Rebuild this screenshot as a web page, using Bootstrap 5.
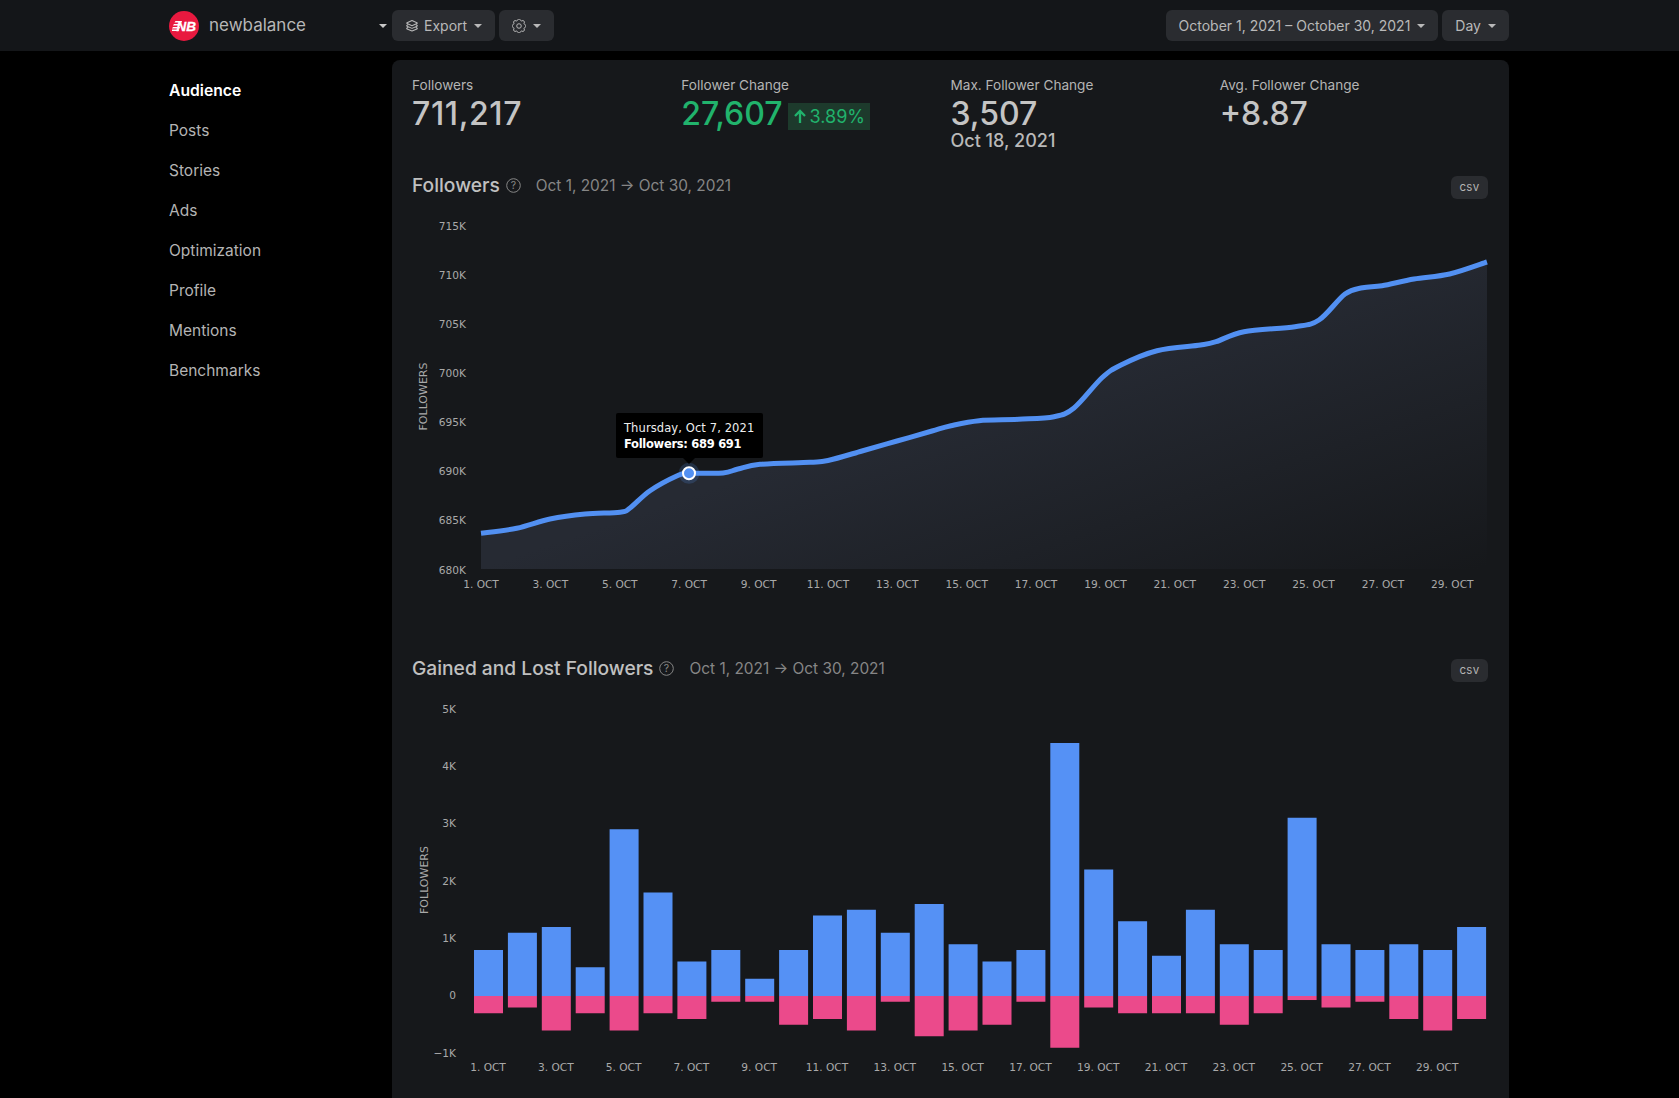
<!DOCTYPE html>
<html lang="en">
<head>
<meta charset="utf-8">
<title>Audience</title>
<link href="https://cdn.jsdelivr.net/npm/bootstrap@5.3.0/dist/css/bootstrap.min.css" rel="stylesheet">
<style>
html, body { height: 100%; }
body { background: #000; color: #b9b9b9; font-family: Inter, "Liberation Sans", sans-serif; overflow: hidden; }
.topbar { height: 51px; background: #141619; padding: 0 170px 0 169px; }
.logo-circle { width: 30px; height: 30px; flex: none; }
.brand-name { font-size: 17px; color: #b7b7b7; margin-left: 10px; width: 170px; line-height: 26px; margin-top: -2px; }
.caret { display: inline-block; width: 0; height: 0; border-left: 4.5px solid transparent; border-right: 4.5px solid transparent; border-top: 4.5px solid currentColor; }
.brand-caret { color: #c8c8c8; margin-right: 5px; }
.tool-btn { background: #2a2c30; color: #b9b9b9; border: 0; border-radius: 6px; height: 31px; padding: 1px 13px 0; font-size: 14px; display: flex; align-items: center; gap: 7px; line-height: 1; }
.tool-btn:hover { background: #2a2c30; color: #b9b9b9; }
.tool-icon { flex: none; }
.icon-tight { margin-right: -2px; }
.shell { padding: 9px 170px 0 169px; }
.side-nav { width: 223px; flex: none; padding-top: 11px; }
.side-link { display: block; height: 40px; line-height: 40px; color: #b4b4b4; font-size: 15.5px; text-decoration: none; }
.side-link.on { color: #fff; font-weight: 600; font-size: 15.7px; }
.panel { flex: 1; background: #16181b; border-radius: 8px 8px 0 0; padding: 15px 20px 0; min-height: 1100px; }
.stat-label { font-size: 13.6px; line-height: 21px; color: #b4b4b4; }
.stat-value { font-size: 32px; line-height: 36px; font-weight: 500; color: #c4c4c4; }
.stat-wide { letter-spacing: .6px; }
.stat-green { color: #21b36c; }
.delta { background: #1d3a2c; color: #21b36c; font-size: 18px; font-weight: 400; height: 27px; line-height: 27px; padding: 0 5px; display: inline-flex; align-items: center; gap: 3px; margin-left: 5px; vertical-align: 2px; }
.stat-sub { font-size: 18px; line-height: 22px; font-weight: 500; color: #b9b9b9; margin-top: -2px; }
.stats-row { height: 95px; }
.sec-head { height: 31px; }
.sec-title { font-size: 19.2px; font-weight: 500; color: #c0c0c0; line-height: 31px; margin-top: -1px; }
.sec-range { font-size: 15.4px; color: #868686; margin: 1px 0 0 15px; }
.help-ic { margin-left: 6px; flex: none; }
.csv-btn { background: #2a2c30; color: #b4b4b4; border: 0; border-radius: 6px; font-size: 11.5px; height: 23px; width: 37px; padding: 0; line-height: 1; letter-spacing: .3px; margin-right: 1px; margin-top: 4px; }
.csv-btn:hover { background: #2a2c30; color: #b4b4b4; }
.chart-box { position: relative; }
.chart-box svg { display: block; }
.chart-one { height: 452px; }
.chart-two { height: 420px; }
.chart-txt { font-family: "DejaVu Sans", sans-serif; font-size: 10.6px; fill: #a9a9a9; }
.chart-ytitle { font-size: 11px; }
.tip { position: absolute; left: 204px; top: 212px; width: 147px; height: 45px; background: #000; border-radius: 2px; color: #eee; font: 11.5px/15.5px "DejaVu Sans", sans-serif; padding: 8px 8px; letter-spacing: .1px; white-space: nowrap; }
.tip::after { content: ""; position: absolute; left: 67px; bottom: -6px; border-left: 6px solid transparent; border-right: 6px solid transparent; border-top: 6px solid #000; }
.tip b { font-weight: 700; color: #fff; letter-spacing: -.3px; }
</style>
</head>
<body>
<nav class="topbar d-flex align-items-center">
  <svg class="logo-circle" viewBox="0 0 30 30" aria-label="New Balance">
    <circle cx="15" cy="15" r="15" fill="#e8193f"/>
    <g fill="#fff">
      <polygon points="6.5,10 13,10 12.5,11.6 5.5,11.6"/>
      <polygon points="5,13 12,13 11.5,14.6 4,14.6"/>
      <polygon points="4,16 11,16 10.5,17.4 3,17.4"/>
      <polygon points="3,18.6 10,18.6 9.5,20 3,20"/>
    </g>
    <text x="7.5" y="20" font-family="Liberation Sans" font-size="13.5" font-style="italic" font-weight="700" fill="#fff" stroke="#fff" stroke-width=".3">NB</text>
  </svg>
  <span class="brand-name">newbalance</span>
  <span class="caret brand-caret"></span>
  <button class="btn tool-btn" type="button">
    <svg class="tool-icon icon-tight" width="14" height="14" viewBox="0 0 16 16" fill="none" stroke="currentColor" stroke-width="1.2" stroke-linejoin="round" stroke-linecap="round"><path d="M8 1.8 13.6 4.2Q14.6 4.7 13.6 5.2L8 7.6 2.4 5.2Q1.4 4.7 2.4 4.2Z"/><path d="M3.4 6.6 2.4 7.2Q1.4 7.8 2.4 8.3L8 10.7 13.6 8.3Q14.6 7.8 13.6 7.2L12.6 6.6"/><path d="M3.4 9.7 2.4 10.3Q1.4 10.9 2.4 11.4L8 13.8 13.6 11.4Q14.6 10.9 13.6 10.3L12.6 9.7"/></svg>
    Export <span class="caret"></span>
  </button>
  <button class="btn tool-btn ms-1" type="button">
    <svg class="tool-icon" width="14" height="14" viewBox="0 0 16 16" fill="none" stroke="currentColor" stroke-width="1.1"><circle cx="8" cy="8" r="2.6"/><path d="M9.796 1.343c-.527-1.79-3.065-1.79-3.592 0l-.094.319a.873.873 0 0 1-1.255.52l-.292-.16c-1.64-.892-3.433.902-2.54 2.541l.159.292a.873.873 0 0 1-.52 1.255l-.319.094c-1.79.527-1.79 3.065 0 3.592l.319.094a.873.873 0 0 1 .52 1.255l-.16.292c-.892 1.64.901 3.434 2.541 2.54l.292-.159a.873.873 0 0 1 1.255.52l.094.319c.527 1.79 3.065 1.79 3.592 0l.094-.319a.873.873 0 0 1 1.255-.52l.292.16c1.64.893 3.434-.902 2.54-2.541l-.159-.292a.873.873 0 0 1 .52-1.255l.319-.094c1.79-.527 1.79-3.065 0-3.592l-.319-.094a.873.873 0 0 1-.52-1.255l.16-.292c.893-1.64-.902-3.433-2.541-2.54l-.292.159a.873.873 0 0 1-1.255-.52l-.094-.319z"/></svg>
    <span class="caret"></span>
  </button>
  <button class="btn tool-btn ms-auto" type="button">October 1, 2021 – October 30, 2021 <span class="caret"></span></button>
  <button class="btn tool-btn ms-1" type="button">Day <span class="caret"></span></button>
</nav>

<div class="shell d-flex">
  <nav class="side-nav">
    <a class="side-link on" href="#">Audience</a>
    <a class="side-link" href="#">Posts</a>
    <a class="side-link" href="#">Stories</a>
    <a class="side-link" href="#">Ads</a>
    <a class="side-link" href="#">Optimization</a>
    <a class="side-link" href="#">Profile</a>
    <a class="side-link" href="#">Mentions</a>
    <a class="side-link" href="#">Benchmarks</a>
  </nav>
  <main class="panel">
    <div class="row g-0 stats-row">
      <div class="col-3">
        <div class="stat-label">Followers</div>
        <div class="stat-value stat-wide">711,217</div>
      </div>
      <div class="col-3">
        <div class="stat-label">Follower Change</div>
        <div class="stat-value stat-green">27,607<span class="delta"><svg width="14" height="14" viewBox="0 0 14 14" fill="none" stroke="currentColor" stroke-width="2.3"><path d="M7 14V2M2 7 7 2 12 7"/></svg>3.89%</span></div>
      </div>
      <div class="col-3">
        <div class="stat-label">Max. Follower Change</div>
        <div class="stat-value">3,507</div>
        <div class="stat-sub">Oct 18, 2021</div>
      </div>
      <div class="col-3">
        <div class="stat-label">Avg. Follower Change</div>
        <div class="stat-value">+8.87</div>
      </div>
    </div>

    <div class="sec-head d-flex align-items-center">
      <span class="sec-title">Followers</span>
      <svg class="help-ic" width="15" height="15" viewBox="0 0 15 15"><circle cx="7.5" cy="7.5" r="6.8" fill="none" stroke="#868686"/><text x="7.5" y="11.2" text-anchor="middle" font-size="10.5" fill="#868686" font-family="Inter">?</text></svg>
      <span class="sec-range">Oct 1, 2021 → Oct 30, 2021</span>
      <button class="btn csv-btn ms-auto" type="button">csv</button>
    </div>
    <div class="chart-box chart-one">
      <svg id="chartA" width="1077" height="452" viewBox="412 201 1077 452"></svg>
      <div class="tip">Thursday, Oct 7, 2021<br><b>Followers: 689 691</b></div>
    </div>

    <div class="sec-head d-flex align-items-center">
      <span class="sec-title">Gained and Lost Followers</span>
      <svg class="help-ic" width="15" height="15" viewBox="0 0 15 15"><circle cx="7.5" cy="7.5" r="6.8" fill="none" stroke="#868686"/><text x="7.5" y="11.2" text-anchor="middle" font-size="10.5" fill="#868686" font-family="Inter">?</text></svg>
      <span class="sec-range">Oct 1, 2021 → Oct 30, 2021</span>
      <button class="btn csv-btn ms-auto" type="button">csv</button>
    </div>
    <div class="chart-box chart-two">
      <svg id="chartB" width="1077" height="420" viewBox="412 684 1077 420"></svg>
    </div>
  </main>
</div>

<script>
var NS = 'http://www.w3.org/2000/svg';
function el(parent, tag, attrs, txt) {
  var e = document.createElementNS(NS, tag);
  for (var k in attrs) e.setAttribute(k, attrs[k]);
  if (txt !== undefined) e.textContent = txt;
  parent.appendChild(e);
  return e;
}
function label(svg, x, y, s, anchor) {
  el(svg, 'text', {x: x, y: y, 'class': 'chart-txt', 'text-anchor': anchor || 'middle'}, s);
}
function yTitle(svg, x, y) {
  el(svg, 'text', {x: x, y: y, 'class': 'chart-txt chart-ytitle', 'text-anchor': 'middle', transform: 'rotate(-90 ' + x + ' ' + y + ')'}, 'FOLLOWERS');
}

/* Chart A: followers line */
var A = document.getElementById('chartA');
var pts = [[481,533.3],[516.7,528.3],[550,519],[585,514],[620,512.3],[630,508],[650,490.7],[676.7,476],[688.7,473.3],[723,473],[738,469],[760,464.3],[810,462.3],[828,460.5],[862,451],[897,441],[932,431],[951,425.7],[979,420.7],[1018.6,419.3],[1054,416.7],[1074,408],[1101.7,378],[1121,365],[1157,350.7],[1200.5,345],[1216,341.7],[1244,331.7],[1295,326.7],[1319,320],[1345,294],[1362.6,287.7],[1382,285.7],[1414,279],[1449.6,274],[1487,262]];
function smooth(p) {
  var d = 'M' + p[0][0] + ' ' + p[0][1];
  for (var i = 0; i < p.length - 1; i++) {
    var a = p[Math.max(i - 1, 0)], b = p[i], c = p[i + 1], e = p[Math.min(i + 2, p.length - 1)];
    d += 'C' + (b[0] + (c[0] - a[0]) / 6).toFixed(1) + ' ' + (b[1] + (c[1] - a[1]) / 6).toFixed(1) + ' ' +
         (c[0] - (e[0] - b[0]) / 6).toFixed(1) + ' ' + (c[1] - (e[1] - b[1]) / 6).toFixed(1) + ' ' + c[0] + ' ' + c[1];
  }
  return d;
}
var defs = el(A, 'defs', {});
var grad = el(defs, 'linearGradient', {id: 'areaFill', gradientUnits: 'userSpaceOnUse', x1: 481, y1: 568, x2: 587, y2: 876});
el(grad, 'stop', {offset: '0', 'stop-color': '#262a33'});
el(grad, 'stop', {offset: '1', 'stop-color': '#16181b'});
var line = smooth(pts);
el(A, 'path', {d: line + 'L1487 569L481 569Z', fill: 'url(#areaFill)'});
el(A, 'path', {d: line, fill: 'none', stroke: '#5290f2', 'stroke-width': 5});
el(A, 'circle', {cx: 689, cy: 473.3, r: 10.5, fill: '#5290f2', 'fill-opacity': .2});
el(A, 'circle', {cx: 689, cy: 473.3, r: 6, fill: '#5290f2', stroke: '#fff', 'stroke-width': 2});
[['715K',230],['710K',279],['705K',328],['700K',377],['695K',426],['690K',475],['685K',524],['680K',574]].forEach(function (t) {
  label(A, 466, t[1], t[0], 'end');
});
for (var d = 1; d <= 29; d += 2) label(A, 481 + (d - 1) * 34.69, 588, d + '. OCT');
yTitle(A, 427, 396.5);

/* Chart B: gained and lost bars */
var B = document.getElementById('chartB');
var gain = [.8,1.1,1.2,.5,2.9,1.8,.6,.8,.3,.8,1.4,1.5,1.1,1.6,.9,.6,.8,4.4,2.2,1.3,.7,1.5,.9,.8,3.1,.9,.8,.9,.8,1.2];
var loss = [.3,.2,.6,.3,.6,.3,.4,.1,.1,.5,.4,.6,.1,.7,.6,.5,.1,.9,.2,.3,.3,.3,.5,.3,.07,.2,.1,.4,.6,.4];
var zero = 996, unit = 57.5;
gain.forEach(function (g, i) {
  var x = 474 + i * 33.9;
  el(B, 'rect', {x: x, y: zero - g * unit, width: 29, height: g * unit, fill: '#5591f5'});
  el(B, 'rect', {x: x, y: zero, width: 29, height: loss[i] * unit, fill: '#eb4a8b'});
});
[['5K',713],['4K',770],['3K',827],['2K',885],['1K',942],['0',999],['−1K',1057]].forEach(function (t) {
  label(B, 456, t[1], t[0], 'end');
});
for (var d2 = 1; d2 <= 29; d2 += 2) label(B, 488 + (d2 - 1) * 33.9, 1071, d2 + '. OCT');
yTitle(B, 428, 880);
</script>
<script src="https://cdn.jsdelivr.net/npm/bootstrap@5.3.0/dist/js/bootstrap.bundle.min.js"></script>
</body>
</html>
